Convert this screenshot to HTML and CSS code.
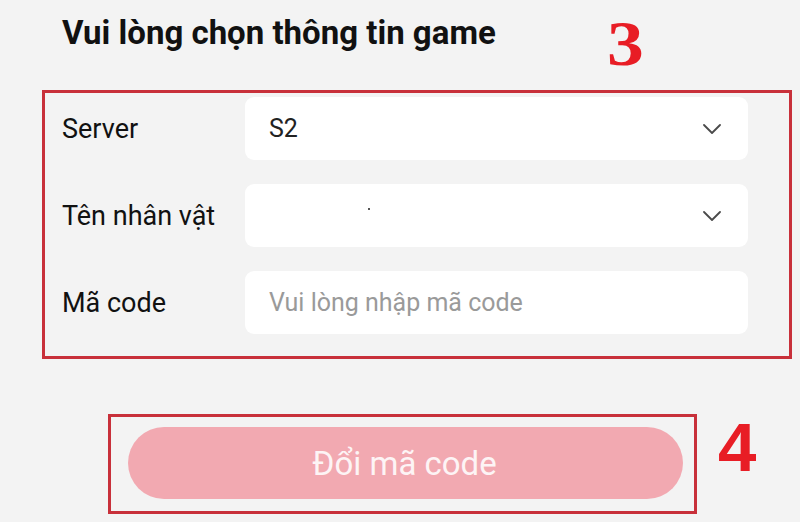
FILE: index.html
```html
<!DOCTYPE html>
<html lang="vi">
<head>
<meta charset="utf-8">
<title>Vui lòng chọn thông tin game</title>
<link rel="stylesheet" href="styles.css">
</head>
<body>
<div class="page">
  <div class="header">
    <h1 class="title">Vui lòng chọn thông tin game</h1>
    <span class="step step-serif">3</span>
  </div>
  <div class="form-box">
    <div class="row">
      <div class="label">Server</div>
      <div class="field">
        <span class="value">S2</span>
        <svg class="chev" width="18" height="10" viewBox="0 0 18 10"><path d="M1 1 L9 9 L17 1" fill="none" stroke="#4a4a4a" stroke-width="1.8" stroke-linecap="round" stroke-linejoin="round"/></svg>
      </div>
    </div>
    <div class="row">
      <div class="label">Tên nhân vật</div>
      <div class="field">
        <span class="value redacted"><span class="dot"></span></span>
        <svg class="chev" width="18" height="10" viewBox="0 0 18 10"><path d="M1 1 L9 9 L17 1" fill="none" stroke="#4a4a4a" stroke-width="1.8" stroke-linecap="round" stroke-linejoin="round"/></svg>
      </div>
    </div>
    <div class="row">
      <div class="label">Mã code</div>
      <div class="field">
        <span class="placeholder">Vui lòng nhập mã code</span>
      </div>
    </div>
  </div>
  <div class="footer">
    <div class="btn-box">
      <div class="btn">Đổi mã code</div>
    </div>
    <span class="step step-sans">4</span>
  </div>
</div>
</body>
</html>
```
FILE: styles.css
```css
html, body {
  margin: 0;
  padding: 0;
}
body {
  background: #f3f3f3;
  font-family: Roboto, "Noto Sans", "Liberation Sans", sans-serif;
  color: #111;
  width: 800px;
  height: 522px;
  overflow: hidden;
}
.page {
  display: flex;
  flex-direction: column;
}
.header {
  display: grid;
  grid-template-columns: 545px auto;
  align-items: start;
  padding-left: 62px;
  height: 90px;
}
.title {
  margin: 0;
  padding-top: 13px;
  font-size: 33px;
  line-height: 40px;
  font-weight: 700;
  color: #111;
  letter-spacing: 0;
}
.step {
  color: #e81d25;
  font-weight: 700;
}
.step-serif {
  font-family: "Liberation Serif", "Times New Roman", serif;
  font-size: 64px;
  line-height: 64px;
  padding-top: 12px;
  display: inline-block;
  transform: scaleX(1.15);
  transform-origin: left center;
}
.form-box {
  margin-left: 42px;
  width: 703px;
  height: 259px;
  border: 3px solid #c8303a;
  padding: 4px 41px 0 0;
  display: flex;
  flex-direction: column;
  gap: 24px;
  box-sizing: content-box;
}
.row {
  display: flex;
  align-items: center;
  height: 63px;
}
.label {
  width: 183px;
  padding-left: 17px;
  font-size: 27px;
  color: #111;
  flex: none;
}
.field {
  flex: 1;
  height: 63px;
  background: #fff;
  border-radius: 9px;
  display: flex;
  align-items: center;
  padding: 0 27px 0 24px;
  box-sizing: border-box;
}
.value {
  flex: 1;
  font-size: 25px;
  color: #222;
}
.redacted {
  position: relative;
  height: 20px;
}
.dot {
  position: absolute;
  left: 99px;
  top: 2px;
  width: 2px;
  height: 2px;
  background: #555;
}
.placeholder {
  flex: 1;
  font-size: 25px;
  color: #9a9a9a;
}
.chev {
  flex: none;
}
.footer {
  display: flex;
  align-items: flex-start;
  margin-top: 55px;
  margin-left: 108px;
}
.btn-box {
  width: 555px;
  height: 84px;
  border: 3px solid #c8303a;
  padding: 10px 11px 0 17px;
  box-sizing: content-box;
}
.btn {
  height: 72px;
  border-radius: 36px;
  background: #f2a9b1;
  color: #fdf4f5;
  font-size: 33px;
  display: flex;
  align-items: center;
  justify-content: center;
  padding-right: 2px;
}
.step-sans {
  font-family: "Liberation Sans", Arial, sans-serif;
  font-size: 69px;
  line-height: 68px;
  margin-left: 21px;
  margin-top: 0px;
}
```
